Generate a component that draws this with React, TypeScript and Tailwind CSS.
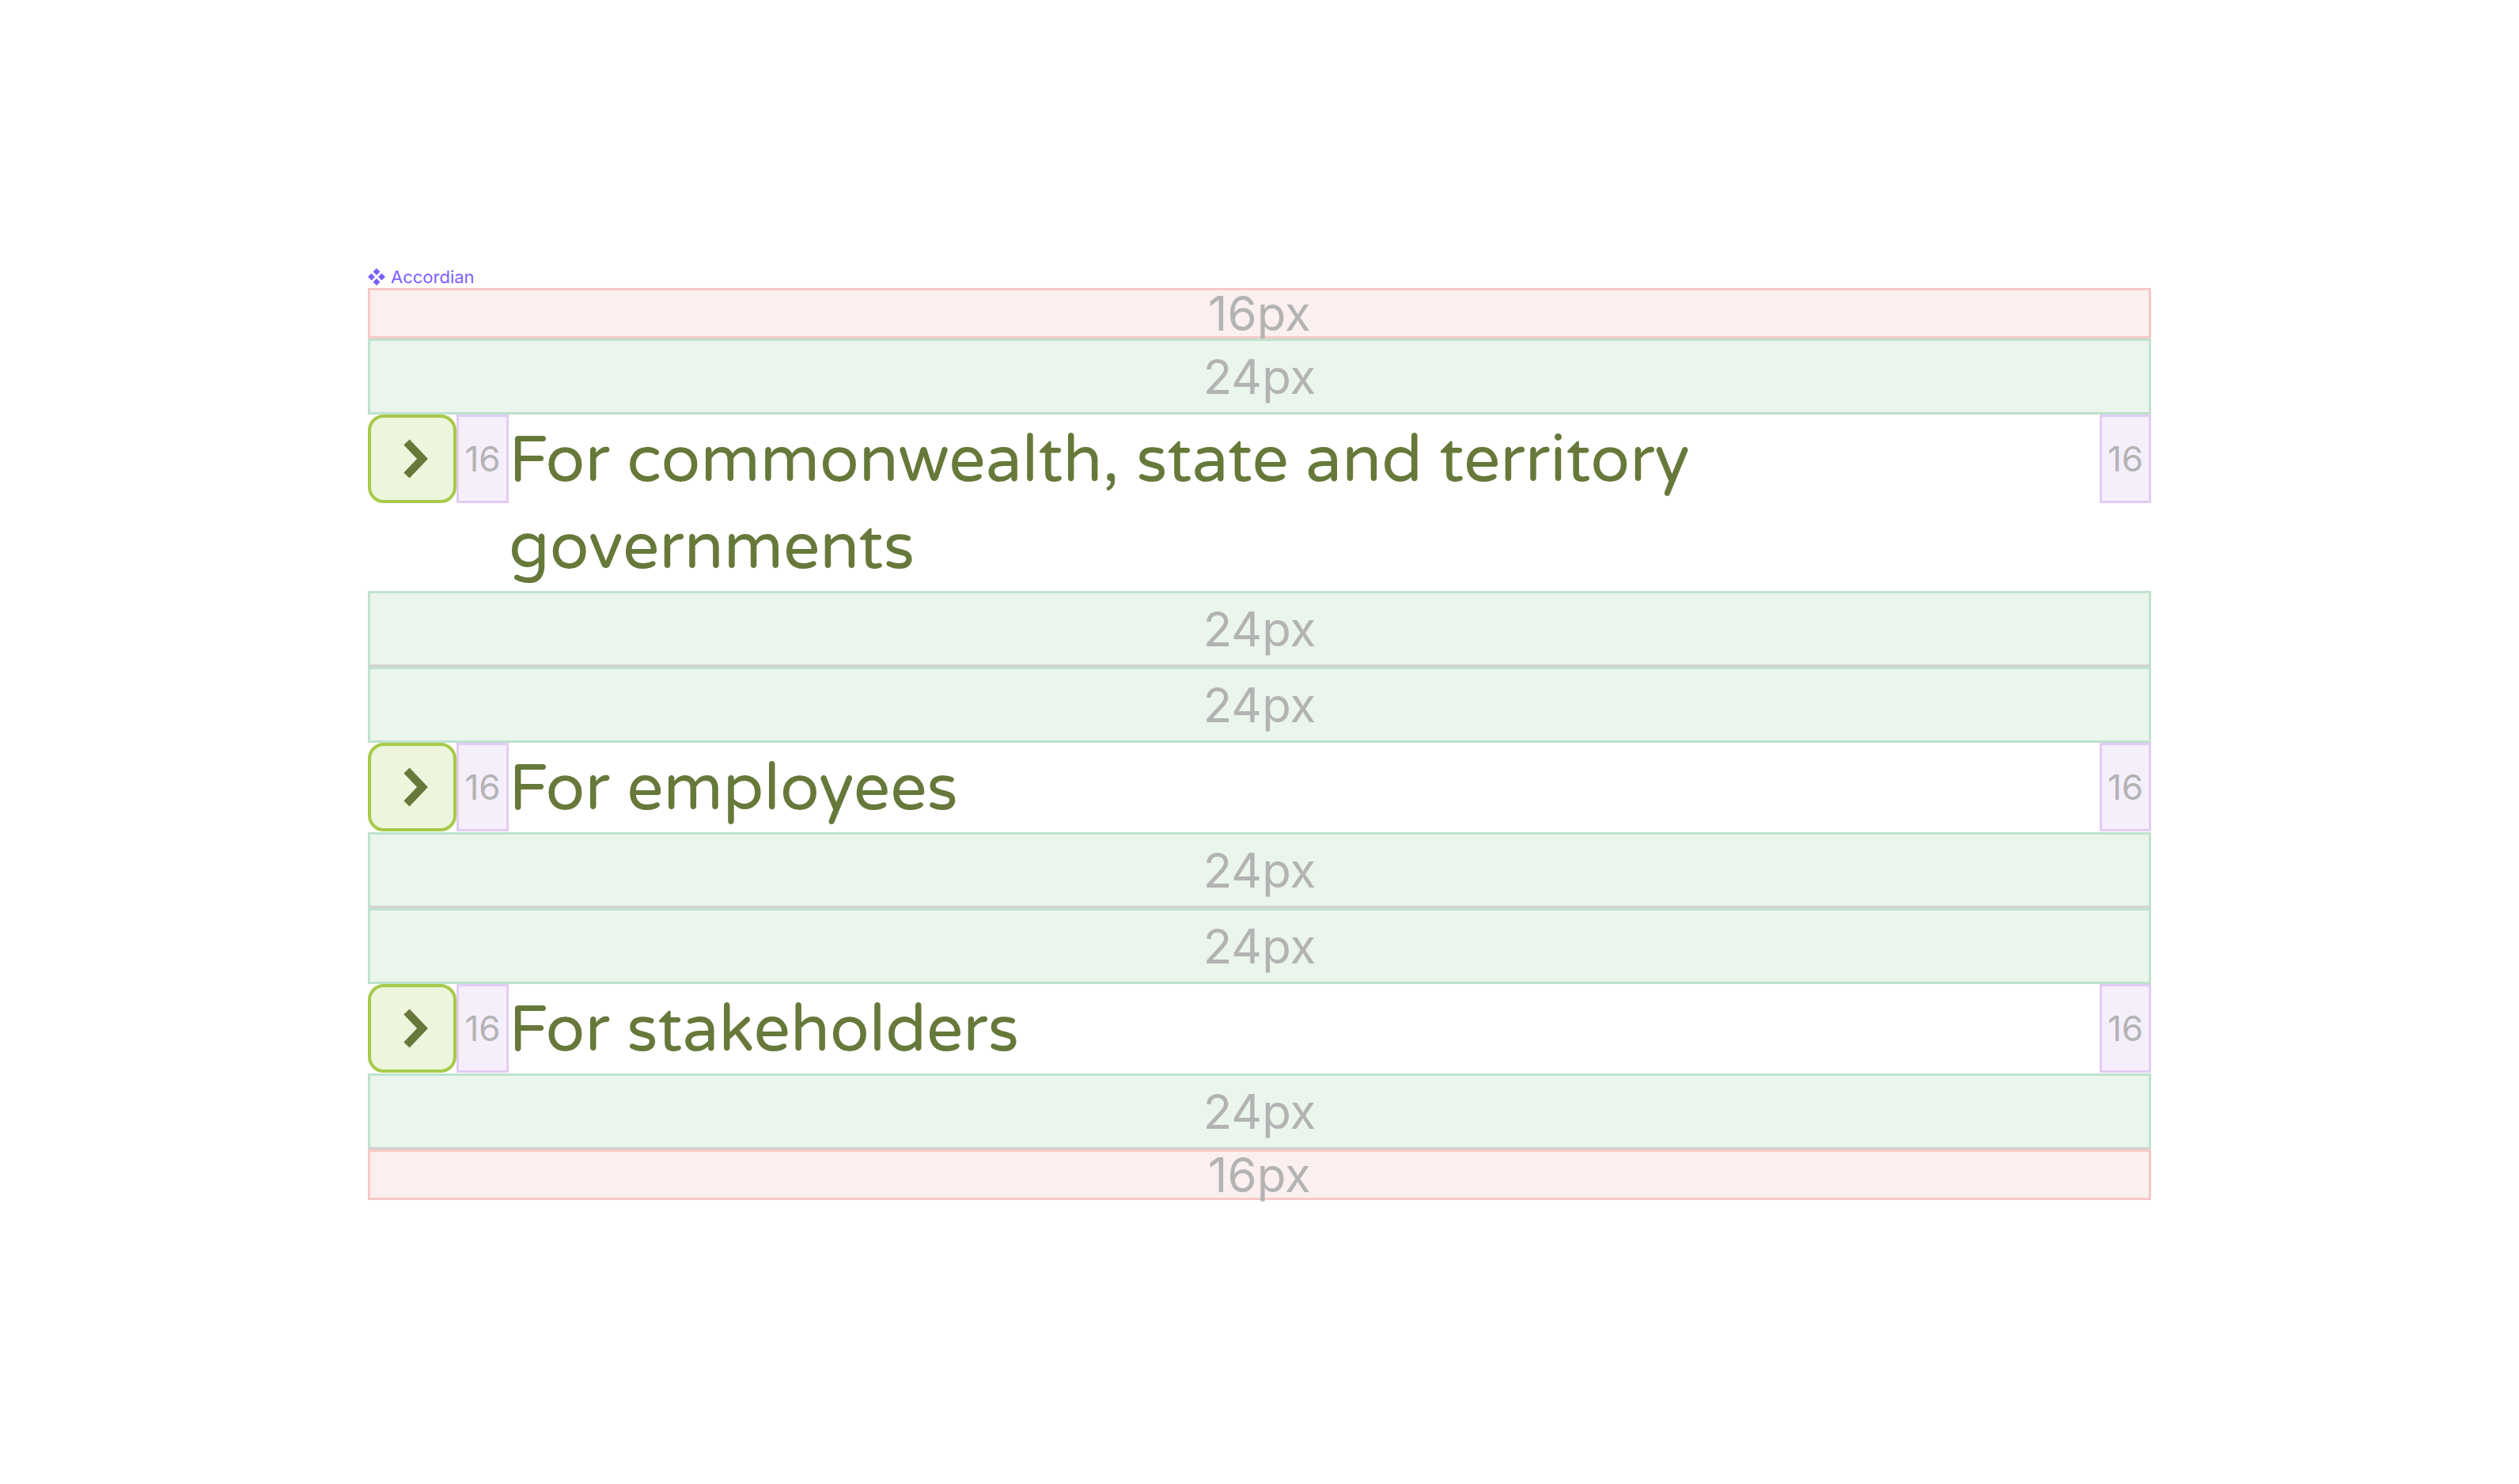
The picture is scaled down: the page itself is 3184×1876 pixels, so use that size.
const headingFont = { fontFamily: "'Varela Round', 'Open Sans', sans-serif" };

function Diamond() {
  return (
    <svg width="22" height="22" viewBox="0 0 22 22" className="shrink-0">
      <g fill="#7b61ff">
        <path d="M11 0 L15.5 4.5 L11 9 L6.5 4.5 Z" />
        <path d="M11 13 L15.5 17.5 L11 22 L6.5 17.5 Z" />
        <path d="M4.5 6.5 L9 11 L4.5 15.5 L0 11 Z" />
        <path d="M17.5 6.5 L22 11 L17.5 15.5 L13 11 Z" />
      </g>
    </svg>
  );
}

function Chevron() {
  return (
    <svg width="34" height="50" viewBox="0 0 34 50" className="ml-[8px]">
      <polyline
        points="6,4 26,25 6,46"
        fill="none"
        stroke="#66793a"
        strokeWidth="10"
        strokeLinecap="butt"
        strokeLinejoin="miter"
      />
    </svg>
  );
}

function Spacer({
  label,
  tone,
  divider,
}: {
  label: string;
  tone: "pink" | "green";
  divider?: boolean;
}) {
  const box =
    tone === "pink"
      ? "h-[64px] bg-[#fcefef] border-[3px] border-[#f6c9c9]"
      : divider
        ? "h-[96px] bg-[#eaf5ec] border-[3px] border-[#bfe2cd] border-b-[#d2d2d2]"
        : "h-[96px] bg-[#eaf5ec] border-[3px] border-[#bfe2cd]";
  return (
    <div className={`${box} flex items-center justify-center`}>
      <span className="font-['Inter'] text-[60px] leading-none text-[#b3b3b3]">
        {label}
      </span>
    </div>
  );
}

function Gap16({ wide }: { wide?: boolean }) {
  return (
    <div
      className={`${wide ? "w-[66px]" : "w-[65px]"} h-[112px] shrink-0 border-[3px] border-[#e2ccf4] bg-[#f5effc] flex items-center justify-center`}
    >
      <span className="font-['Inter'] text-[44px] leading-none text-[#b3b3b3]">16</span>
    </div>
  );
}

function Row({ title }: { title: string }) {
  return (
    <div className="flex items-start bg-white">
      <div className="w-[112px] h-[112px] shrink-0 rounded-[20px] border-4 border-[#a8c94a] bg-[#edf5dc] flex items-center justify-center">
        <Chevron />
      </div>
      <Gap16 wide />
      <div
        style={headingFont}
        className="flex-1 text-[82px] leading-[110px] pt-[3px] text-[#66793a]"
      >
        {title}
      </div>
      <Gap16 />
    </div>
  );
}

export default function App() {
  return (
    <div className="min-h-screen bg-white pl-[465px] pt-[337px]">
      <div className="w-[2254px] flex flex-col">
        <div className="flex items-center gap-[7px] h-[26px] mb-[1px]">
          <Diamond />
          <span className="font-['Inter'] text-[22px] leading-none text-[#7b61ff]">
            Accordian
          </span>
        </div>
        <Spacer label="16px" tone="pink" />
        <Spacer label="24px" tone="green" />
        <Row title="For commonwealth, state and territory governments" />
        <Spacer label="24px" tone="green" divider />
        <Spacer label="24px" tone="green" />
        <Row title="For employees" />
        <Spacer label="24px" tone="green" divider />
        <Spacer label="24px" tone="green" />
        <Row title="For stakeholders" />
        <Spacer label="24px" tone="green" divider />
        <Spacer label="16px" tone="pink" />
      </div>
    </div>
  );
}
